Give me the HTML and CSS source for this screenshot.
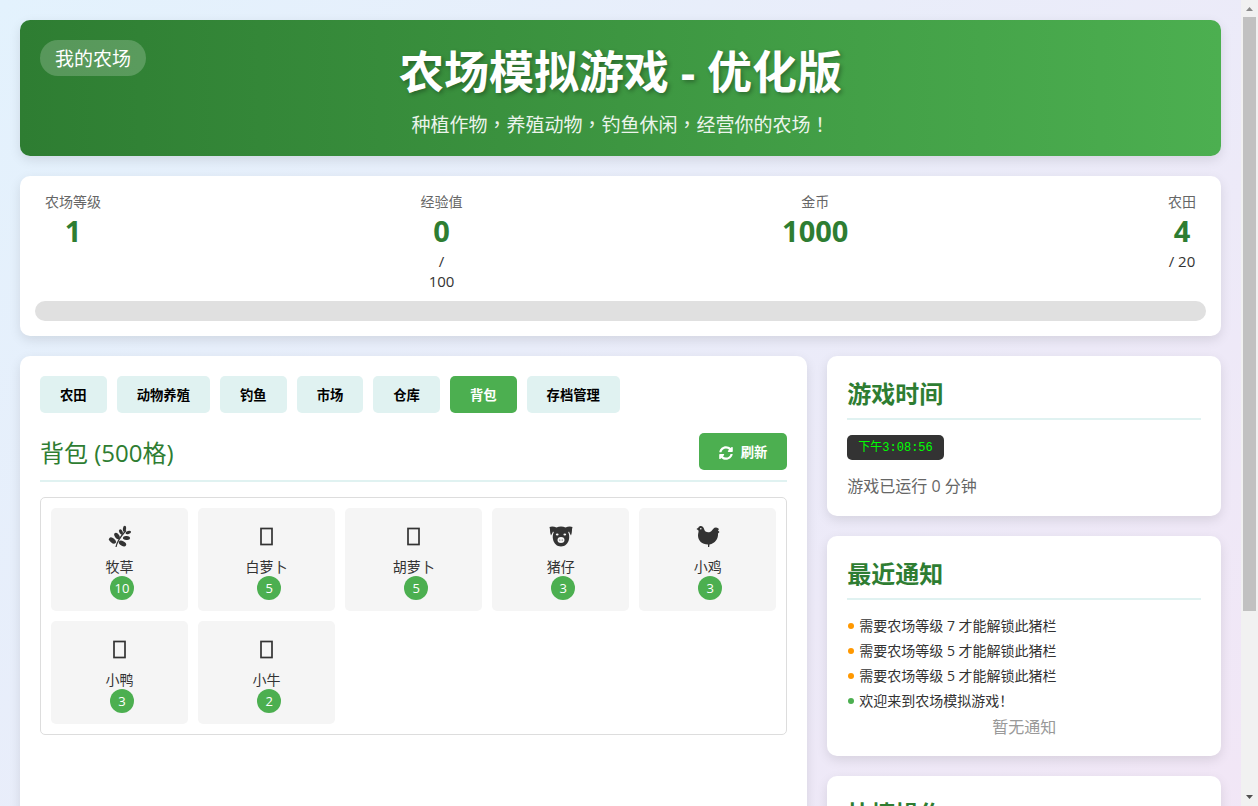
FILE: index.html
```
<!DOCTYPE html>
<html lang="zh-CN">
<head>
    <meta charset="UTF-8">
    <meta name="viewport" content="width=device-width, initial-scale=1.0">
    <title>农场模拟游戏 - 优化版</title>
    <link rel="stylesheet" href="styles.css">
</head>
<body>
    <svg class="sprite" aria-hidden="true">
        <symbol id="icon-box" viewBox="0 0 24 24">
            <rect x="6" y="4" width="11" height="16" fill="none" stroke="currentColor" stroke-width="1.7"/>
        </symbol>
        <symbol id="icon-herb" viewBox="0 0 24 24">
            <path d="M8 22.500C9 17 13 11.500 18 6" fill="none" stroke="currentColor" stroke-width="1.200"/>
            <g fill="currentColor">
                <ellipse cx="4.500" cy="16" rx="4" ry="2.400" transform="rotate(40 4.500 16)"/>
                <ellipse cx="9" cy="11.500" rx="3.600" ry="2.200" transform="rotate(55 9 11.500)"/>
                <ellipse cx="13" cy="7.500" rx="2.800" ry="1.700" transform="rotate(60 13 7.500)"/>
                <ellipse cx="16.500" cy="4.300" rx="3" ry="1.600" transform="rotate(-85 16.500 4.300)"/>
                <ellipse cx="20.300" cy="8" rx="2.800" ry="1.600" transform="rotate(-15 20.300 8)"/>
                <ellipse cx="18.500" cy="13.500" rx="3.600" ry="2" transform="rotate(5 18.500 13.500)"/>
                <ellipse cx="14.500" cy="19" rx="4" ry="2.400" transform="rotate(30 14.500 19)"/>
            </g>
        </symbol>
        <symbol id="icon-pig" viewBox="0 0 24 24">
            <path fill="currentColor" fill-rule="evenodd" d="M.5 2.500C2.500 1.500 5 1.800 7.500 3c2.800-1.200 6.200-1.200 9 0 2.500-1.200 5-1.500 7-.5-1 2.500 0 5-1.500 8.500-.8-1-1.500-3-2-4l-.8.8c1 2 1.300 4.500.8 7C19 19.500 16 22 12 22s-7-2.500-8-7.200c-.5-2.500-.2-5 .8-7L4 7c-.5 1-1.200 3-2 4C.5 7.500 1.500 5 .5 2.500zM6.800 10a1.400 1 0 1 0 2.800 0 1.400 1 0 1 0-2.800 0zM14.400 10a1.400 1 0 1 0 2.800 0 1.400 1 0 1 0-2.800 0zM8.500 15.500a3.500 3 0 1 0 7 0 3.500 3 0 1 0-7 0z"/>
            <circle cx="10.800" cy="15.500" r=".6" fill="currentColor"/>
            <circle cx="13.200" cy="15.500" r=".6" fill="currentColor"/>
        </symbol>
        <symbol id="icon-chicken" viewBox="0 0 24 24">
            <path fill="currentColor" fill-rule="evenodd" d="M.5 4.500 2.500 3C3 1.500 5.500 1 7 2.500c1.500 1.500 1 3.500 2.500 4.500 2 1.200 4.500 1 6-.5C17 5 17.500 3 20 3c1.500 0 2 1 3 1.500L22 6l1.500 1.500L22 9c.5 5-3 10-8.500 11l-.3 2.500h-1.200L12 20C6 20 2 16 2 11c0-2 .8-3.500.5-5zM4 4.300a.8.800 0 1 0 1.600 0 .8.800 0 1 0-1.600 0z"/>
        </symbol>
    </svg>

    <div class="window">
        <div class="page">
            <header class="header">
                <span class="farm-name">我的农场</span>
                <h1>农场模拟游戏 - 优化版</h1>
                <p>种植作物，养殖动物，钓鱼休闲，经营你的农场！</p>
            </header>

            <section class="stats">
                <div class="stats-row">
                    <div class="stat">
                        <div class="stat-label">农场等级</div>
                        <div class="stat-value">1</div>
                    </div>
                    <div class="stat">
                        <div class="stat-label">经验值</div>
                        <div class="stat-value">0</div>
                        <div class="stat-max">/</div>
                        <div class="stat-max">100</div>
                    </div>
                    <div class="stat">
                        <div class="stat-label">金币</div>
                        <div class="stat-value">1000</div>
                    </div>
                    <div class="stat">
                        <div class="stat-label">农田</div>
                        <div class="stat-value">4</div>
                        <div class="stat-max">/ 20</div>
                    </div>
                </div>
                <progress class="exp-bar" value="0" max="100" aria-label="经验值"></progress>
            </section>

            <div class="layout">
                <main class="card">
                    <nav class="tabs">
                        <button class="btn">农田</button>
                        <button class="btn">动物养殖</button>
                        <button class="btn">钓鱼</button>
                        <button class="btn">市场</button>
                        <button class="btn">仓库</button>
                        <button class="btn active">背包</button>
                        <button class="btn">存档管理</button>
                    </nav>

                    <div class="section-title">
                        <span>背包 (500格)</span>
                        <button class="btn active refresh">
                            <svg class="refresh-icon" viewBox="0 0 512 512" aria-hidden="true">
                                <path fill="currentColor" d="M370.700 133.300C339.500 104 298.900 88 255.800 88c-77.500.1-144.300 53.200-162.800 126.900-1.300 5.400-6.100 9.100-11.700 9.100H24.100c-7.500 0-13.200-6.800-11.800-14.200C33.900 94.900 134.800 8 256 8c66.400 0 126.800 26.100 171.300 68.700L463 41c15.100-15.100 41-4.400 41 17v134c0 13.300-10.700 24-24 24H346c-21.400 0-32.100-25.900-17-41l41.700-41.700zM32 296h134c21.400 0 32.100 25.900 17 41l-41.800 41.800c31.300 29.300 71.800 45.300 114.900 45.300 77.400-.1 144.300-53.100 162.800-126.800 1.300-5.400 6.100-9.100 11.700-9.100h57.300c7.500 0 13.200 6.800 11.800 14.200C478.100 417.100 377.200 504 256 504c-66.400 0-126.800-26.100-171.300-68.700L49 471c-15.100 15.100-41 4.400-41-17V320c0-13.300 10.700-24 24-24z"/>
                            </svg>
                            刷新
                        </button>
                    </div>

                    <div class="bag">
                        <div class="item">
                            <svg class="item-icon"><use href="#icon-herb"/></svg>
                            <div class="item-name">牧草</div>
                            <span class="item-count">10</span>
                        </div>
                        <div class="item">
                            <svg class="item-icon"><use href="#icon-box"/></svg>
                            <div class="item-name">白萝卜</div>
                            <span class="item-count">5</span>
                        </div>
                        <div class="item">
                            <svg class="item-icon"><use href="#icon-box"/></svg>
                            <div class="item-name">胡萝卜</div>
                            <span class="item-count">5</span>
                        </div>
                        <div class="item">
                            <svg class="item-icon"><use href="#icon-pig"/></svg>
                            <div class="item-name">猪仔</div>
                            <span class="item-count">3</span>
                        </div>
                        <div class="item">
                            <svg class="item-icon"><use href="#icon-chicken"/></svg>
                            <div class="item-name">小鸡</div>
                            <span class="item-count">3</span>
                        </div>
                        <div class="item">
                            <svg class="item-icon"><use href="#icon-box"/></svg>
                            <div class="item-name">小鸭</div>
                            <span class="item-count">3</span>
                        </div>
                        <div class="item">
                            <svg class="item-icon"><use href="#icon-box"/></svg>
                            <div class="item-name">小牛</div>
                            <span class="item-count">2</span>
                        </div>
                    </div>
                </main>

                <aside class="sidebar">
                    <section class="card">
                        <h2>游戏时间</h2>
                        <div class="clock">下午3:08:56</div>
                        <p class="runtime">游戏已运行 0 分钟</p>
                    </section>
                    <section class="card">
                        <h2>最近通知</h2>
                        <ul class="notices">
                            <li class="warning">需要农场等级 7 才能解锁此猪栏</li>
                            <li class="warning">需要农场等级 5 才能解锁此猪栏</li>
                            <li class="warning">需要农场等级 5 才能解锁此猪栏</li>
                            <li class="success">欢迎来到农场模拟游戏！</li>
                        </ul>
                        <p class="empty">暂无通知</p>
                    </section>
                    <section class="card grow">
                        <h2>快捷操作</h2>
                    </section>
                </aside>
            </div>
        </div>

        <div class="scrollbar" aria-hidden="true">
            <svg class="arrow" viewBox="0 0 17 17"><path d="M5 11h7L8.500 7z" fill="#8a8a8a"/></svg>
            <div class="track"><div class="thumb"></div></div>
            <svg class="arrow" viewBox="0 0 17 17"><path d="M5 6h7l-3.500 4z" fill="#505050"/></svg>
        </div>
    </div>
</body>
</html>
```
FILE: styles.css
```
* {
    box-sizing: border-box;
    margin: 0;
    padding: 0;
}
body {
    font-family: "Open Sans", "Noto Sans CJK SC", sans-serif;
    color: #333;
    height: 100vh;
    overflow: hidden;
}
.sprite {
    display: none;
}
.window {
    display: grid;
    grid-template-columns: minmax(0, 1fr) 17px;
    height: 100vh;
    overflow: hidden;
}
.page {
    display: flex;
    flex-direction: column;
    gap: 20px;
    min-height: 130vh;
    padding: 20px;
    background: linear-gradient(135deg, #e3f2fd, #f3e5f5);
}

/* header */
.header {
    position: relative;
    padding: 20px;
    text-align: center;
    color: white;
    background: linear-gradient(to right, #2e7d32, #4caf50);
    border-radius: 10px;
    box-shadow: 0 4px 12px rgba(0, 0, 0, 0.1);
}
.header h1 {
    font-size: 45px;
    line-height: 64px;
    text-shadow: 2px 2px 4px rgba(0, 0, 0, 0.3);
}
.header p {
    margin-top: 8px;
    font-family: "Noto Sans CJK TC", "Noto Sans CJK SC", sans-serif;
    font-feature-settings: "locl" 0;
    font-size: 19px;
    line-height: 24px;
    opacity: 0.9;
}
.farm-name {
    position: absolute;
    top: 20px;
    left: 20px;
    padding: 5px 15px 3px;
    font-size: 19px;
    line-height: 28px;
    background: rgba(255, 255, 255, 0.2);
    border-radius: 20px;
}

/* stats */
.stats {
    padding: 15px;
    background: white;
    border-radius: 10px;
    box-shadow: 0 4px 12px rgba(0, 0, 0, 0.1);
}
.stats-row {
    display: flex;
    justify-content: space-between;
}
.stat {
    padding: 0 10px;
    text-align: center;
}
.stat-label {
    font-size: 14px;
    line-height: 22px;
    color: #666;
}
.stat-value {
    padding-bottom: 2px;
    font-size: 29px;
    line-height: 36px;
    font-weight: bold;
    color: #2e7d32;
}
.stat-max {
    font-size: 15px;
    line-height: 20px;
}
.exp-bar {
    display: block;
    width: 100%;
    height: 20px;
    margin-top: 10px;
    appearance: none;
    border: none;
    border-radius: 10px;
    overflow: hidden;
    background: #e0e0e0;
}
.exp-bar::-webkit-progress-bar {
    background: #e0e0e0;
}
.exp-bar::-webkit-progress-value {
    background: #4caf50;
}

/* main area */
.layout {
    flex: 1;
    display: grid;
    grid-template-columns: 2fr 1fr;
    gap: 20px;
}
.card {
    padding: 20px;
    background: white;
    border-radius: 10px;
    box-shadow: 0 4px 12px rgba(0, 0, 0, 0.1);
}
.tabs {
    display: flex;
    flex-wrap: wrap;
    gap: 10px;
    margin-bottom: 20px;
}
.btn {
    padding: 11px 20px 9px;
    font-family: inherit;
    font-weight: bold;
    line-height: 17px;
    color: black;
    background: #e0f2f1;
    border: none;
    border-radius: 5px;
    cursor: pointer;
}
.btn.active {
    color: white;
    background: #4caf50;
}
.section-title {
    display: flex;
    justify-content: space-between;
    padding-bottom: 10px;
    margin-bottom: 15px;
    font-size: 24px;
    line-height: 40px;
    color: #2e7d32;
    border-bottom: 2px solid #e0f2f1;
}
.refresh {
    display: flex;
    align-items: center;
    gap: 8px;
    align-self: flex-start;
}
.section-title > span {
    height: 37px;
}
.refresh-icon {
    width: 14px;
    height: 14px;
}
.bag {
    display: grid;
    grid-template-columns: repeat(auto-fill, minmax(120px, 1fr));
    gap: 10px;
    padding: 10px;
    border: 1px solid #ddd;
    border-radius: 5px;
}
.item {
    padding: 10px 10px 11px;
    text-align: center;
    background: #f5f5f5;
    border-radius: 5px;
}
.item-icon {
    display: block;
    width: 24px;
    height: 37px;
    margin: 0 auto;
}
.item-name {
    padding-top: 3px;
    font-size: 14px;
    line-height: 18px;
}
.item-count {
    display: inline-block;
    width: 24px;
    margin-left: 5px;
    vertical-align: top;
    font-size: 13px;
    line-height: 24px;
    color: white;
    background: #4caf50;
    border-radius: 50%;
}

/* sidebar */
.sidebar {
    display: flex;
    flex-direction: column;
    gap: 20px;
}
.sidebar h2 {
    padding-bottom: 6px;
    margin-bottom: 15px;
    font-size: 24px;
    line-height: 36px;
    color: #2e7d32;
    border-bottom: 2px solid #e0f2f1;
}
.grow {
    flex: 1;
}
.clock {
    width: fit-content;
    padding: 6px 11px 4px;
    font-family: "Liberation Mono", "Noto Sans CJK SC", monospace;
    font-size: 12px;
    line-height: 15px;
    color: #0f0;
    background: #333;
    border-radius: 5px;
}
.runtime {
    margin-top: 16px;
    font-size: 16px;
    line-height: 20px;
    color: #666;
}
.notices {
    list-style: none;
}
.notices li {
    display: flex;
    align-items: center;
    gap: 5px;
    padding: 0 0 3px 1px;
    font-size: 14px;
    line-height: 22px;
}
.notices li::before {
    content: "";
    width: 6px;
    height: 6px;
    border-radius: 50%;
}
.notices .warning::before {
    background: #ff9800;
}
.notices .success::before {
    background: #4caf50;
}
.empty {
    padding-top: 3px;
    font-size: 16px;
    line-height: 18px;
    text-align: center;
    color: #999;
}

/* scrollbar */
.scrollbar {
    display: flex;
    flex-direction: column;
    height: 100vh;
    background: #f1f1f1;
}
.arrow {
    width: 17px;
    height: 17px;
}
.track {
    flex: 1;
    padding: 0 2px;
}
.thumb {
    height: 77%;
    background: #c1c1c1;
}
```
